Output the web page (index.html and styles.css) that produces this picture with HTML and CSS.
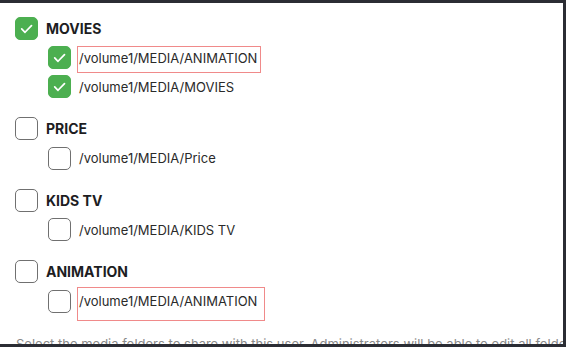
FILE: index.html
```html
<!DOCTYPE html>
<html lang="en">
<head>
  <meta charset="UTF-8" />
  <title>Media folders</title>
  <link rel="stylesheet" href="styles.css">
</head>
<body>
  <div class="panel">
    <div class="folders">
      <div class="group">
        <label class="row head"><span class="box checked"><svg viewBox="0 0 24 24"><path d="M6.5 12.5l3.8 3.8 7.4-7.6"/></svg></span>MOVIES</label>
        <label class="row sub"><span class="box checked"><svg viewBox="0 0 24 24"><path d="M6.5 12.5l3.8 3.8 7.4-7.6"/></svg></span><span class="path mark-a">/volume1/MEDIA/ANIMATION</span></label>
        <label class="row sub"><span class="box checked"><svg viewBox="0 0 24 24"><path d="M6.5 12.5l3.8 3.8 7.4-7.6"/></svg></span><span class="path">/volume1/MEDIA/MOVIES</span></label>
      </div>
      <div class="group">
        <label class="row head"><span class="box"></span>PRICE</label>
        <label class="row sub"><span class="box"></span><span class="path">/volume1/MEDIA/Price</span></label>
      </div>
      <div class="group">
        <label class="row head"><span class="box"></span>KIDS TV</label>
        <label class="row sub"><span class="box"></span><span class="path">/volume1/MEDIA/KIDS TV</span></label>
      </div>
      <div class="group">
        <label class="row head"><span class="box"></span>ANIMATION</label>
        <label class="row sub"><span class="box"></span><span class="path mark-b">/volume1/MEDIA/ANIMATION</span></label>
      </div>
    </div>
    <p class="hint">Select the media folders to share with this user. Administrators will be able to edit all folders.</p>
  </div>
</body>
</html>
```

FILE: styles.css
```css
html, body {
  margin: 0;
  height: 100%;
}
body {
  background-color: #2b2d34;
  font-family: Inter, "Noto Sans", Arial, sans-serif;
  padding: 3px 3px 3px 0;
  box-sizing: border-box;
}
.panel {
  background: #fff;
  height: 100%;
  overflow: hidden;
  padding: 10px 0 0 15px;
  box-sizing: border-box;
}
.group {
  margin-bottom: 12.5px;
}
.row {
  display: flex;
  align-items: center;
}
.head {
  height: 30px;
  font-size: 14px;
  font-weight: 700;
  color: #1d1d1f;
}
.sub {
  height: 29px;
  padding-left: 33px;
  font-size: 13px;
  color: #2a2a2a;
}
.box {
  width: 23px;
  height: 23px;
  box-sizing: border-box;
  border: 1.5px solid #707070;
  border-radius: 5px;
  margin-right: 8px;
  flex: none;
  display: flex;
}
.box.checked {
  background: #4caf50;
  border-color: #4caf50;
}
.box svg {
  width: 100%;
  height: 100%;
  fill: none;
  stroke: #fff;
  stroke-width: 2;
  stroke-linecap: round;
  stroke-linejoin: round;
}
.path {
  position: relative;
}
.mark-a::after,
.mark-b::after {
  content: "";
  position: absolute;
  border: 1.5px solid #f08a8a;
}
.mark-a::after {
  left: -2px;
  right: -4px;
  top: -4px;
  bottom: -7px;
}
.mark-b::after {
  left: -2px;
  right: -8px;
  top: -6px;
  bottom: -12px;
}
.hint {
  margin: 20px 0 0 1px;
  font-size: 13px;
  color: #8a8a8a;
  white-space: nowrap;
}
```
